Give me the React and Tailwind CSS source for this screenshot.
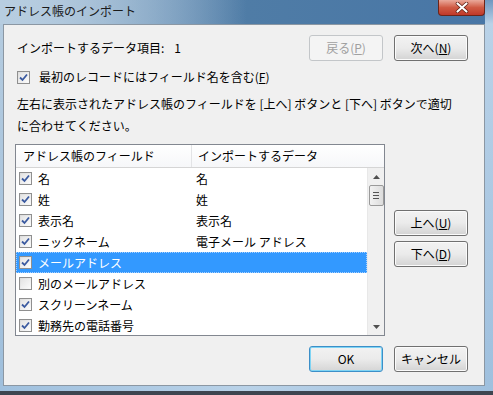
import React from "react";

const font = { fontFamily: '"Noto Sans CJK JP", "Noto Sans", sans-serif' };

function Check({ on }) {
  return (
    <div className="w-[13px] h-[13px] border border-[#8f8f8f] bg-gradient-to-br from-[#dcdcdc] to-[#fbfbfb] p-[1px] shrink-0">
      <div className="w-full h-full bg-gradient-to-br from-[#e4e4e4] to-[#fafafa] flex items-center justify-center">
        {on && (
          <svg width="9" height="9" viewBox="0 0 9 9">
            <path d="M1 4.5 L3.5 7 L8 1.5" fill="none" stroke="#3b5aa0" strokeWidth="1.8" />
          </svg>
        )}
      </div>
    </div>
  );
}

function Btn({ children, disabled, def, className = "" }) {
  let cls =
    "w-[74px] h-[26px] rounded-[3px] flex items-center justify-center text-[12px] ";
  if (disabled) cls += "border border-[#c3c6c9] bg-[#f4f4f4] text-[#a0a0a0]";
  else if (def)
    cls +=
      "border border-[#3c8fc8] shadow-[inset_0_0_0_1px_#7fd4f4] bg-gradient-to-b from-[#f2f2f2] via-[#ebebeb] to-[#d5d5d5] text-black";
  else
    cls +=
      "border border-[#707070] shadow-[inset_0_0_0_1px_#fbfbfb] bg-gradient-to-b from-[#f2f2f2] via-[#ebebeb] to-[#d3d3d3] text-black";
  return <div className={cls + " " + className}>{children}</div>;
}

const rows = [
  { c: true, a: "名", b: "名" },
  { c: true, a: "姓", b: "姓" },
  { c: true, a: "表示名", b: "表示名" },
  { c: true, a: "ニックネーム", b: "電子メール アドレス" },
  { c: true, a: "メールアドレス", b: "", sel: true },
  { c: false, a: "別のメールアドレス", b: "" },
  { c: true, a: "スクリーンネーム", b: "" },
  { c: true, a: "勤務先の電話番号", b: "" },
];

export default function App() {
  return (
    <div
      className="w-[493px] h-[395px] overflow-hidden flex flex-col bg-gradient-to-r from-[#b4cbdf] via-[#4f7ca6] to-[#4876a6] text-black"
      style={font}
    >
      {/* title bar */}
      <div className="h-[24px] flex items-start justify-between bg-gradient-to-r from-[#b7cde0] via-[#a9c3da_20%] to-[#3d6c99_35%]">
        <div className="pl-[4px] pt-[3px] text-[12px] leading-[16px] text-[#1a1a1a]">
          アドレス帳のインポート
        </div>
        <div className="flex">
          <div className="w-[47px] h-[16px] rounded-b-[4px] border border-t-0 border-[#6d2418] bg-gradient-to-b from-[#e9a99b] via-[#cf5a44] to-[#c0382a] flex items-center justify-center">
            <svg width="14" height="11" viewBox="0 0 14 11">
              <path d="M2.5 1.5 L11.5 9.5 M11.5 1.5 L2.5 9.5" stroke="#5a1a10" strokeWidth="3.6" strokeLinecap="round" />
              <path d="M2.5 1.5 L11.5 9.5 M11.5 1.5 L2.5 9.5" stroke="#ffffff" strokeWidth="2.2" strokeLinecap="round" />
            </svg>
          </div>
          <div className="w-[8px] h-[24px] bg-gradient-to-b from-[#6f97c0] to-[#b9d2e8]" />
        </div>
      </div>

      <div className="flex h-[362px]">
        <div className="w-[3px] bg-gradient-to-b from-[#b4cbdf] to-[#9fbfdc]" />
        {/* client */}
        <div className="w-[482px] border border-[#8b97a3] bg-[#f0f0f0] pl-[11px] pr-[16px] pt-[10px] flex flex-col">
          <div className="h-[26px] flex items-center justify-between">
            <div className="pl-[2px] text-[12px] whitespace-pre">
              インポートするデータ項目:<span className="ml-[10px]">1</span>
            </div>
            <div className="flex gap-[11px]">
              <Btn disabled>
                戻る(<span className="underline">P</span>)
              </Btn>
              <Btn>
                次へ(<span className="underline">N</span>)
              </Btn>
            </div>
          </div>
          <div className="mt-[6px] h-[20px] flex items-center gap-[9px] pl-[2px] text-[12px]">
            <Check on />
            <span>
              最初のレコードにはフィールド名を含む(<span className="underline">F</span>)
            </span>
          </div>
          <div className="mt-[6px] h-[44px] pl-[2px] text-[12px] leading-[22px]">
            左右に表示されたアドレス帳のフィールドを [上へ] ボタンと [下へ] ボタンで適切
            <br />
            に合わせてください。
          </div>
          <div className="mt-[7px] flex gap-[9px]">
            {/* list */}
            <div className="w-[370px] h-[192px] border border-[#828790] bg-white flex flex-col overflow-hidden">
              <div className="h-[23px] shrink-0 flex border-b border-[#d5d5d5] bg-gradient-to-b from-[#ffffff] to-[#f6f7f9] text-[12px]">
                <div className="w-[176px] border-r border-[#e3e4e6] pl-[7px] flex items-center">
                  アドレス帳のフィールド
                </div>
                <div className="flex-1 pl-[6px] flex items-center">インポートするデータ</div>
              </div>
              <div className="flex flex-1 min-h-0">
                <div className="flex-1 flex flex-col">
                  {rows.map((r, i) => (
                    <div
                      key={i}
                      className={
                        "h-[21px] shrink-0 flex items-center text-[12px] " +
                        (r.sel ? "bg-[#3399ff] text-white outline-1 outline-dotted outline-[#a6d0ff] -outline-offset-1" : "")
                      }
                    >
                      <div className="w-[176px] flex items-center gap-[6px] pl-[3px]">
                        <Check on={r.c} />
                        <span>{r.a}</span>
                      </div>
                      <div className="pl-[4px]">{r.b}</div>
                    </div>
                  ))}
                </div>
                {/* scrollbar */}
                <div className="w-[17px] bg-[#f0f0f0] border-l border-[#e8e8e8] flex flex-col items-center">
                  <div className="h-[17px] flex items-center justify-center">
                    <svg width="7" height="4" viewBox="0 0 7 4">
                      <path d="M0 4 L3.5 0 L7 4 Z" fill="#505050" />
                    </svg>
                  </div>
                  <div className="w-[15px] h-[21px] rounded-[2px] border border-[#9a9a9a] bg-gradient-to-r from-[#f2f2f2] to-[#dcdcdc] flex flex-col items-center justify-center gap-[2px]">
                    <div className="w-[6px] h-[1px] bg-[#555]" />
                    <div className="w-[6px] h-[1px] bg-[#555]" />
                    <div className="w-[6px] h-[1px] bg-[#555]" />
                  </div>
                  <div className="flex-1" />
                  <div className="h-[17px] flex items-center justify-center">
                    <svg width="7" height="4" viewBox="0 0 7 4">
                      <path d="M0 0 L3.5 4 L7 0 Z" fill="#505050" />
                    </svg>
                  </div>
                </div>
              </div>
            </div>
            <div className="flex flex-col pt-[66px] gap-[5px]">
              <Btn>
                上へ(<span className="underline">U</span>)
              </Btn>
              <Btn>
                下へ(<span className="underline">D</span>)
              </Btn>
            </div>
          </div>
          <div className="mt-[10px] flex justify-end gap-[11px]">
            <Btn def>OK</Btn>
            <Btn>キャンセル</Btn>
          </div>
        </div>
        <div className="w-[8px] bg-gradient-to-b from-[#b9d2e8] to-[#9fc0de]" />
      </div>
      <div className="h-[5px] bg-gradient-to-r from-[#9fc0de] via-[#b9d2e8] to-[#9fc0de]" />
      <div className="flex-1 bg-[#3e4550]" />
    </div>
  );
}
